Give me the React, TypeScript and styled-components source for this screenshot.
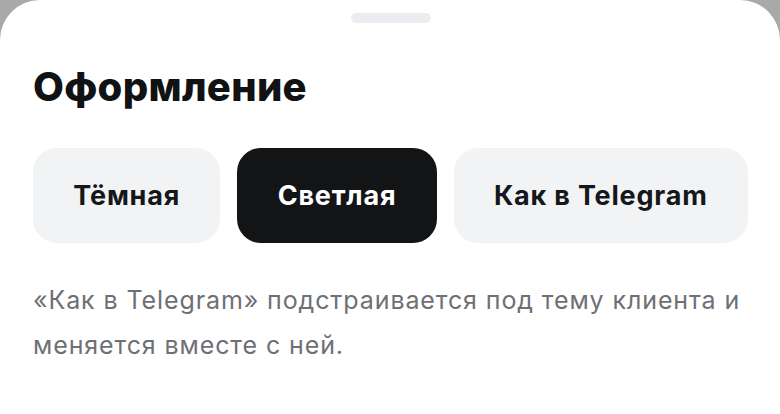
import React, { useState } from "react";
import styled, { createGlobalStyle } from "styled-components";

const Global = createGlobalStyle`
  html, body { margin: 0; padding: 0; background: #a9a9a9; }
  body { font-family: Inter, "Noto Sans", sans-serif; -webkit-font-smoothing: antialiased; }
`;

const Sheet = styled.div`
  width: 780px;
  min-height: 414px;
  box-sizing: border-box;
  background: #ffffff;
  border-radius: 40px 40px 0 0;
  padding: 13px 32px 0 33px;
  display: flex;
  flex-direction: column;
`;

const Handle = styled.div`
  align-self: center;
  width: 80px;
  height: 10px;
  border-radius: 5px;
  background: #ebedf0;
`;

const Title = styled.h1`
  margin: 40px 0 0;
  font-size: 40px;
  line-height: 48px;
  font-weight: 800;
  color: #101214;
  letter-spacing: 0.3px;
`;

const Options = styled.div`
  margin-top: 37px;
  display: flex;
  gap: 17px;
`;

const Option = styled.button<{ $active: boolean }>`
  flex: 1 1 auto;
  height: 95px;
  padding: 0 38px;
  border: none;
  border-radius: 24px;
  font-family: inherit;
  font-size: 27px;
  font-weight: 700;
  letter-spacing: 0.8px;
  cursor: pointer;
  background: ${(p) => (p.$active ? "#121416" : "#f2f3f5")};
  color: ${(p) => (p.$active ? "#ffffff" : "#15171a")};
`;

const Hint = styled.p`
  margin: 35px 0 0;
  font-size: 25px;
  line-height: 45px;
  color: #6d7075;
  font-weight: 400;
  letter-spacing: 0.9px;
`;

const options = ["Тёмная", "Светлая", "Как в Telegram"];

export default function App() {
  const [active, setActive] = useState(1);
  return (
    <>
      <Global />
      <Sheet>
        <Handle />
        <Title>Оформление</Title>
        <Options>
          {options.map((o, i) => (
            <Option key={o} $active={i === active} onClick={() => setActive(i)}>
              {o}
            </Option>
          ))}
        </Options>
        <Hint>«Как в Telegram» подстраивается под тему клиента и меняется вместе с ней.</Hint>
      </Sheet>
    </>
  );
}
